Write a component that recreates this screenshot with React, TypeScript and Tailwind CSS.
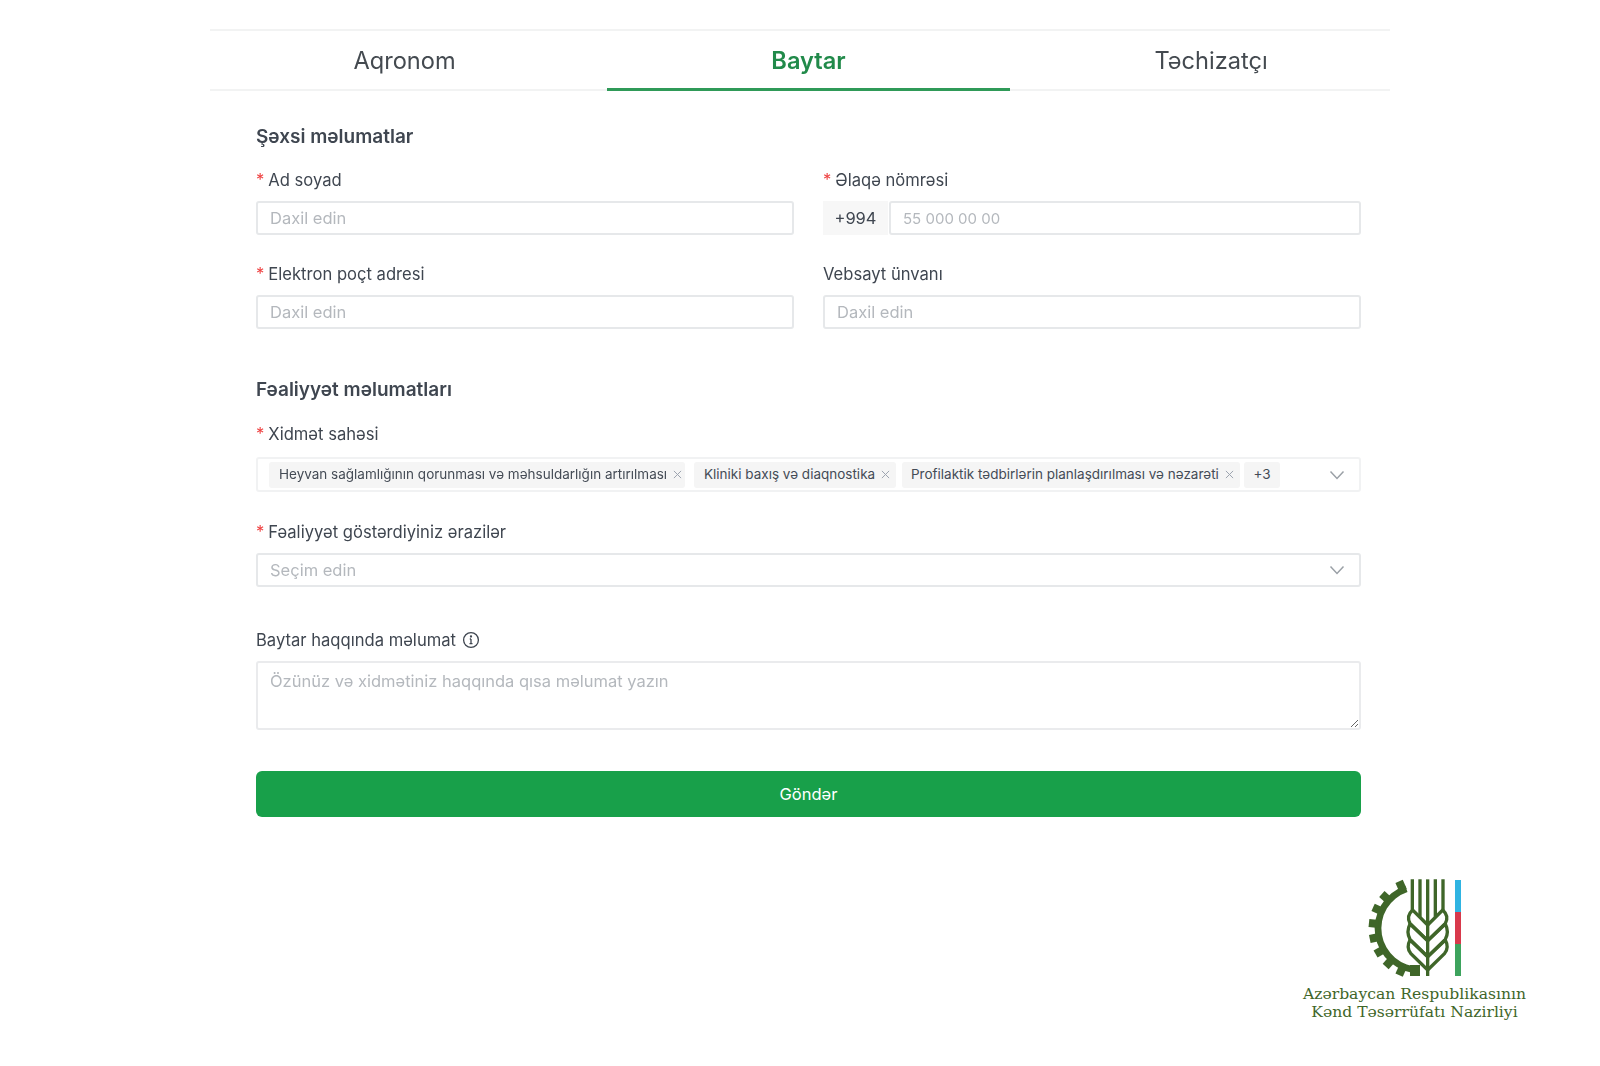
import React from "react";

const Req = () => <span className="text-[#ef4444] mr-[4px]">*</span>;

function Label({ text, req }: { text: string; req?: boolean }) {
  return (
    <div className="h-[20px] flex items-center text-[16.6px] leading-[20px] text-[#3f4650]">
      {req && <Req />}
      {text}
    </div>
  );
}

const inputBase =
  "w-full h-[34px] border-2 border-[#e6e8ea] rounded-[3px] px-[12px] bg-white outline-none placeholder:text-[#b4b8bd]";

function Field({ label, req, placeholder = "Daxil edin" }: { label: string; req?: boolean; placeholder?: string }) {
  return (
    <div className="flex flex-col gap-[11px]">
      <Label text={label} req={req} />
      <input className={`${inputBase} text-[16.5px]`} placeholder={placeholder} />
    </div>
  );
}

function X() {
  return (
    <svg width="9" height="9" viewBox="0 0 10 10" className="ml-[6px] shrink-0" stroke="#9ca3af" strokeWidth="1.1" fill="none">
      <path d="M1 1l8 8M9 1l-8 8" />
    </svg>
  );
}

function Chip({ text, w, pl = "pl-[10px]" }: { text: string; w: string; pl?: string }) {
  return (
    <div className={`h-[26px] flex items-center justify-between ${pl} pr-[7px] bg-[#f5f5f5] rounded-[3px] text-[13.5px] text-[#444b55] whitespace-nowrap ${w}`}>
      <span>{text}</span>
      <X />
    </div>
  );
}

function Chevron() {
  return (
    <svg width="16" height="10" viewBox="0 0 16 10" fill="none" stroke="#9aa0a6" strokeWidth="1.5">
      <path d="M1.5 1.5L8 8.5l6.5-7" />
    </svg>
  );
}

function Grain() {
  return (
    <>
      <path d="M203 165L158 120Q138 138 150 160L203 212" />
      <path d="M203 212L150 162Q138 185 150 208L203 260" />
      <path d="M203 260L150 210Q138 232 152 250L203 300" />
    </>
  );
}

function Logo() {
  const g = "#3f6629";
  const teeth = [24, 42, 60, 78, 96, 114, 132, 156];
  return (
    <svg width="110" height="110" viewBox="0 0 330 330">
      <path d="M180 290A115 115 0 0 1 142.5 66L136 47A135 135 0 0 0 180 310Z" fill={g} />
      <rect x="150" y="285" width="30" height="33" fill={g} />
      {teeth.map((a) => (
        <rect key={a} x="-12" y="125" width="24" height="29" fill={g} transform={`translate(180 175) rotate(${a})`} />
      ))}
      <g stroke={g} strokeWidth="10" fill="none">
        <path d="M203 318V28" />
        <path d="M157 28V122M180 28V140M226 28V140M249 28V122" />
        <Grain />
        <g transform="translate(406 0) scale(-1 1)">
          <Grain />
        </g>
      </g>
      <rect x="285" y="30" width="18" height="96" fill="#2fb4e2" />
      <rect x="285" y="126" width="18" height="96" fill="#d8394b" />
      <rect x="285" y="222" width="18" height="96" fill="#3da35d" />
    </svg>
  );
}

export default function App() {
  return (
    <div className="w-[1600px] h-[1066px] bg-white overflow-hidden font-['Inter',sans-serif] flex flex-col">
      <div className="ml-[210px] w-[1180px] mt-[29px] blur-[0.6px]">
        <div className="flex h-[62px] border-t-2 border-b-2 border-[#f2f3f3]">
          <div className="w-[397px] pr-[8px] flex items-center justify-center text-[23.6px] text-[#444a50]">
            <span className="translate-y-[1px]">Aqronom</span>
          </div>
          <div className="w-[403px] -mb-[2px] pb-0 border-b-[3px] border-[#2f9a58] flex items-center justify-center text-[23.6px] font-semibold text-[#218a4a]">
            <span className="translate-y-[1px]">Baytar</span>
          </div>
          <div className="w-[380px] pl-[22px] flex items-center justify-center text-[23.6px] text-[#444a50]">
            <span className="translate-y-[1px]">Təchizatçı</span>
          </div>
        </div>

        <div className="px-[46px] w-[1196px] -mr-[16px]">
          <div className="text-[19px] leading-[24px] font-semibold text-[#3f4650] mt-[34px]">Şəxsi məlumatlar</div>
          <div className="grid grid-cols-[538px_538px] gap-x-[29px] gap-y-[29px] mt-[21px] w-[1105px]">
            <Field label="Ad soyad" req />
            <div className="flex flex-col gap-[11px]">
              <Label text="Əlaqə nömrəsi" req />
              <div className="flex h-[34px]">
                <div className="w-[65px] shrink-0 bg-[#f7f7f7] flex items-center justify-center text-[16.5px] text-[#3f4650] mr-[1px]">+994</div>
                <input className={`${inputBase} text-[15px]`} placeholder="55 000 00 00" />
              </div>
            </div>
            <Field label="Elektron poçt adresi" req />
            <Field label="Vebsayt ünvanı" />
          </div>

          <div className="text-[19px] leading-[24px] font-semibold text-[#3f4650] mt-[49px]">Fəaliyyət məlumatları</div>
          <div className="w-[1105px] mt-[22px] flex flex-col">
            <Label text="Xidmət sahəsi" req />
            <div className="mt-[13px] h-[35px] border-2 border-[#f1f2f3] rounded-[3px] flex items-center pl-[11px] pr-[14px]">
              <Chip text="Heyvan sağlamlığının qorunması və məhsuldarlığın artırılması" w="w-[416px]" />
              <div className="ml-[9px]"><Chip text="Kliniki baxış və diaqnostika" w="w-[202px]" /></div>
              <div className="ml-[6px]"><Chip text="Profilaktik tədbirlərin planlaşdırılması və nəzarəti" w="w-[338px]" pl="pl-[9px]" /></div>
              <div className="ml-[4px] h-[26px] w-[36px] flex items-center justify-center bg-[#f5f5f5] rounded-[3px] text-[13.5px] text-[#444b55]">+3</div>
              <div className="ml-auto flex items-center"><Chevron /></div>
            </div>

            <div className="mt-[30px]"><Label text="Fəaliyyət göstərdiyiniz ərazilər" req /></div>
            <div className="mt-[11px] h-[34px] border-2 border-[#e6e8ea] rounded-[3px] flex items-center justify-between pl-[12px] pr-[14px] text-[16.5px] text-[#b4b8bd]">
              Seçim edin
              <Chevron />
            </div>

            <div className="mt-[43px] flex items-center gap-[6px]">
              <Label text="Baytar haqqında məlumat" />
              <svg width="18" height="18" viewBox="0 0 18 18" fill="none" stroke="#3f4650" strokeWidth="1.3">
                <circle cx="9" cy="9" r="7.4" />
                <path d="M9 8v4.5M7.5 12.7h3M7.8 8H9" />
                <circle cx="9" cy="5.5" r="0.5" fill="#3f4650" />
              </svg>
            </div>
            <textarea
              className="mt-[11px] h-[69px] border-2 border-[#eaebed] rounded-[3px] px-[12px] py-[7px] text-[16.5px] leading-[22px] outline-none placeholder:text-[#b4b8bd]"
              placeholder="Özünüz və xidmətiniz haqqında qısa məlumat yazın"
            />
            <button className="mt-[41px] h-[46px] rounded-[6px] bg-[#18a04a] text-white text-[16.5px] font-normal">Göndər</button>
          </div>
        </div>
      </div>

      <div className="flex flex-col items-center self-end mr-[73px] mt-[53px] w-[225px]">
        <Logo />
        <div className="font-['DejaVu_Serif',serif] text-[15.6px] leading-[18px] text-[#3f6629] text-center whitespace-nowrap mt-[5px]">
          Azərbaycan Respublikasının
          <br />
          Kənd Təsərrüfatı Nazirliyi
        </div>
      </div>
    </div>
  );
}
